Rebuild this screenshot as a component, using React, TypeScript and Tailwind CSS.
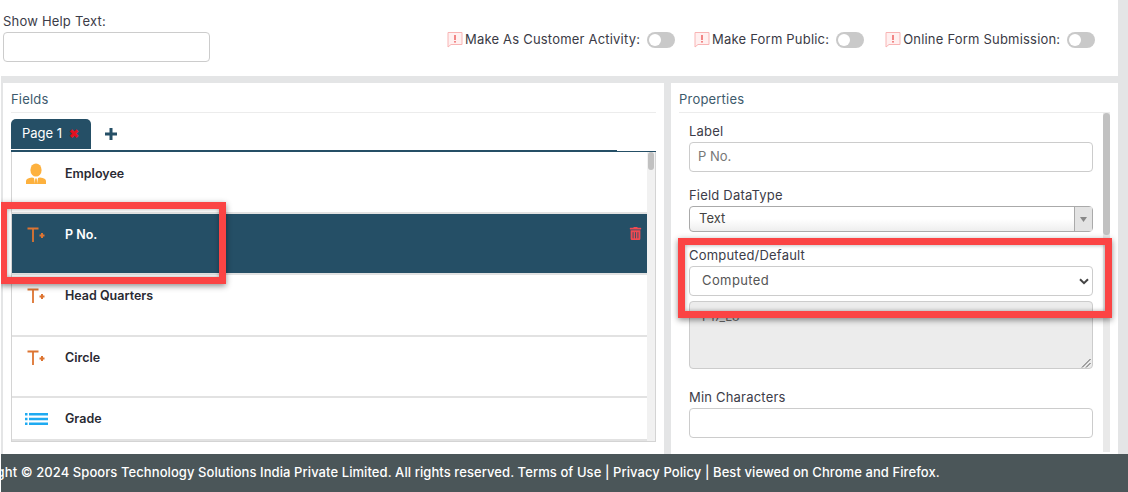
import React from "react";
import { FaTrashAlt } from "react-icons/fa";

const FONT = "font-['Inter','Noto_Sans',sans-serif]";

const AlertIcon = () => (
  <svg width="16" height="17" viewBox="0 0 16 17" fill="none" className="shrink-0">
    <path d="M1 1.500h14v12H4L1 16z" fill="#fff0f0" stroke="#f8b4b4" strokeWidth="1" />
    <rect x="7.200" y="4" width="1.600" height="5" fill="#ef6b6b" />
    <rect x="7.200" y="10" width="1.600" height="1.600" fill="#ef6b6b" />
  </svg>
);

const Toggle = () => (
  <span className="flex h-[16px] w-[28px] items-center rounded-full bg-[#c9c9c9] pl-[2px]">
    <span className="h-[12px] w-[12px] rounded-full bg-white" />
  </span>
);

const Flag = ({ label, className }: { label: string; className: string }) => (
  <div className={`flex items-center ${className}`}>
    <AlertIcon />
    <span className="ml-[2px] mr-[7px] whitespace-nowrap text-[13px] tracking-[0.2px] text-[#3a3a45]">{label}</span>
    <Toggle />
  </div>
);

const TextPlusIcon = () => (
  <svg width="18" height="16" viewBox="0 0 18 16" fill="none">
    <path d="M0.500 1.500h11M6 1.500V15" stroke="#dd7431" strokeWidth="1.800" />
    <path d="M12.500 8.500h5M15 6v5" stroke="#dd7431" strokeWidth="2" />
  </svg>
);

const PersonIcon = () => (
  <svg width="20" height="22" viewBox="0 0 20 22">
    <ellipse cx="10" cy="7" rx="5.600" ry="6.600" fill="#fdb13e" />
    <path d="M0 21v-3c0-2 2-3 6-3.600l2 .6 1 5.900H0zM20 21v-3c0-2-2-3-6-3.600l-2 .6-1 5.900h9z" fill="#fdb13e" />
    <path d="M9.200 15.500h1.600l.4 5.500H8.800z" fill="#fdb13e" />
  </svg>
);

const ListIcon = () => (
  <svg width="23" height="12" viewBox="0 0 23 12">
    <path d="M0 0h2.500v2.500H0zM0 4.750h2.500v2.500H0zM0 9.500h2.500V12H0zM4 0h19v2.500H4zM4 4.750h19v2.500H4zM4 9.500h19V12H4z" fill="#1eaaf1" />
  </svg>
);

const FieldRow = ({
  icon,
  label,
  active,
  className,
}: {
  icon: React.ReactNode;
  label: string;
  active?: boolean;
  className: string;
}) => (
  <div
    className={`flex items-start justify-between border-b-2 border-[#e2e2e2] ${active ? "bg-[#254f66]" : "bg-white"} ${className}`}
  >
    <div className="flex items-center">
      <div className="flex w-[53px] justify-center pr-[5px]">{icon}</div>
      <span className={`text-[12.500px] font-semibold ${active ? "text-white" : "text-[#2a2a33]"}`}>{label}</span>
    </div>
    {active && <FaTrashAlt className="mr-[5px] mt-[1px] text-[13px] text-[#f04a52]" />}
  </div>
);

const Field = ({ label, children, className }: { label: string; children: React.ReactNode; className?: string }) => (
  <div className={className}>
    <div className="h-[19px] text-[13px] leading-[17px] tracking-[0.2px] text-[#3c3c48]">{label}</div>
    {children}
  </div>
);

export default function App() {
  return (
    <div className={`relative flex h-[492px] w-[1128px] flex-col overflow-hidden border-l border-white bg-[#e4e5e6] ${FONT}`}>
      {/* top settings */}
      <div className="mr-[10px] flex h-[76px] bg-white pl-[2px]">
        <div className="w-[207px] pt-[11px]">
          <div className="h-[21px] text-[13px] leading-[20px] tracking-[0.2px] text-[#3c3c48]">Show Help Text:</div>
          <div className="h-[30px] rounded-[4px] border border-[#cccccc] bg-white" />
        </div>
        <div className="flex flex-1 items-start pt-[30px]">
          <Flag label="Make As Customer Activity:" className="ml-[237px]" />
          <Flag label="Make Form Public:" className="ml-[19px]" />
          <Flag label="Online Form Submission:" className="ml-[21px]" />
        </div>
      </div>

      <div className="flex h-[378px] gap-[7px] pl-[2px] pt-[7px]">
        {/* fields panel */}
        <div className="w-[661px] bg-white px-[8px]">
          <div className="h-[30px] border-b border-[#ececec] pt-[8px] text-[13px] leading-[17px] tracking-[0.2px] text-[#3d5a6c]">
            Fields
          </div>
          <div className="mt-[6px] flex h-[30px] items-center">
            <div className="flex h-[30px] w-[80px] items-center gap-[7px] rounded-t-[5px] bg-[#254f66] pl-[11px] text-[13px] text-white">
              Page 1
              <span className="text-[12px] font-bold leading-none text-[#e3101f]">✖</span>
            </div>
            <span className="ml-[14px] flex h-[13px] w-[12px] items-center justify-center">
              <svg width="12" height="12" viewBox="0 0 12 12">
                <path d="M4.500 0h3v4.500H12v3H7.500V12h-3V7.500H0v-3h4.500z" fill="#254f66" />
              </svg>
            </span>
          </div>
          <div className="mt-[1px] h-[1px] w-[606px] bg-[#254f66]" />
          <div className="h-[1px] w-[645px] bg-[#254f66]" />
          <div className="relative h-[290px] w-[645px] overflow-hidden border-x border-b border-[#d4d4d4] pr-[8px]">
            <FieldRow icon={<PersonIcon />} label="Employee" className="h-[62px] pt-[11px]" />
            <FieldRow icon={<TextPlusIcon />} label="P No." active className="h-[61px] pt-[12px]" />
            <FieldRow icon={<TextPlusIcon />} label="Head Quarters" className="h-[62px] pt-[12px]" />
            <FieldRow icon={<TextPlusIcon />} label="Circle" className="h-[61px] pt-[12px]" />
            <FieldRow icon={<ListIcon />} label="Grade" className="h-[43px] border-b-0 pt-[12px]" />
            <div className="absolute right-0 top-0 h-full w-[8px] bg-[#f1f1f1]">
              <div className="ml-[1px] h-[18px] w-[6px] rounded-full bg-[#c1c1c1]" />
            </div>
          </div>
        </div>

        {/* properties panel */}
        <div className="w-[447px] bg-white px-[8px]">
          <div className="h-[30px] border-b border-[#ececec] pt-[8px] text-[13px] leading-[17px] tracking-[0.2px] text-[#3d5a6c]">
            Properties
          </div>
          <div className="relative h-[339px] pl-[10px] pt-[10px]">
            <div className="absolute right-0 top-0 h-full w-[7px] bg-[#e9e9e9]">
              <div className="h-[122px] w-[7px] rounded-full bg-[#c1c1c1]" />
            </div>
            <div className="w-[404px]">
              <Field label="Label">
                <div className="flex h-[30px] items-center rounded-[4px] border border-[#cccccc] pl-[8px] text-[13px] text-[#777]">
                  P No.
                </div>
              </Field>
              <Field label="Field DataType" className="mt-[15px]">
                <div className="flex h-[26px] items-center justify-between rounded-[4px] border border-[#aaaaaa] bg-gradient-to-b from-white from-50% to-[#eeeeee] pl-[9px] text-[13px] text-[#444]">
                  Text
                  <span className="flex h-full w-[18px] items-center justify-center border-l border-[#aaaaaa] bg-[#e3e3e3]">
                    <svg width="7" height="5" viewBox="0 0 7 5">
                      <path d="M0 0h7L3.500 5z" fill="#888" />
                    </svg>
                  </span>
                </div>
              </Field>
              <Field label="Computed/Default" className="mt-[15px]">
                <div className="flex h-[30px] items-center justify-between rounded-[4px] border border-[#cccccc] pl-[12px] pr-[3px] text-[13px] tracking-[0.4px] text-[#555]">
                  Computed
                  <svg width="10" height="7" viewBox="0 0 10 7" fill="none">
                    <path d="M1 1.200l4 4 4-4" stroke="#444" strokeWidth="2" />
                  </svg>
                </div>
              </Field>
              <div className="mt-[5px] flex h-[68px] items-start justify-between rounded-[4px] border border-[#cccccc] bg-[#ececec] pl-[12px] pt-[6px] text-[12px] text-[#666]">
                P17_L8
                <svg width="10" height="10" viewBox="0 0 10 10" className="mr-[1px] mt-[50px]" stroke="#555" fill="none">
                  <path d="M1 9.500L9.500 1M5 9.500L9.500 5" />
                </svg>
              </div>
              <Field label="Min Characters" className="mt-[20px]">
                <div className="h-[30px] rounded-[4px] border border-[#cccccc]" />
              </Field>
            </div>
          </div>
        </div>
      </div>

      {/* footer */}
      <div className="flex h-[38px] items-center overflow-hidden bg-[#4b5659]">
        <span className="-ml-[46px] whitespace-nowrap text-[13px] font-medium tracking-[0.08px] text-white">
          Copyright © 2024 Spoors Technology Solutions India Private Limited. All rights reserved. Terms of Use | Privacy
          Policy | Best viewed on Chrome and Firefox.
        </span>
      </div>

      {/* screenshot annotations */}
      <div className="absolute left-[-1px] top-[202px] h-[82px] w-[226px] border-[7px] border-[#fb4444] shadow-[0_2px_6px_rgba(0,0,0,0.45),inset_0_0_4px_rgba(0,0,0,0.35)]" />
      <div className="absolute left-[677px] top-[238px] h-[80px] w-[434px] border-[7px] border-[#fb4444] shadow-[0_2px_6px_rgba(0,0,0,0.45),inset_0_0_4px_rgba(0,0,0,0.35)]" />
    </div>
  );
}
